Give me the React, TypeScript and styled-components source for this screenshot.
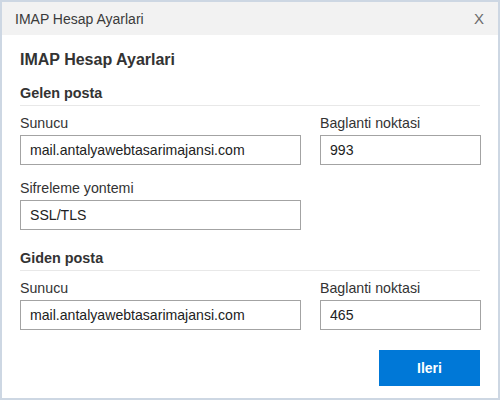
import styled, { createGlobalStyle } from "styled-components";

const GlobalStyle = createGlobalStyle`
  html, body {
    margin: 0;
    padding: 0;
    background: #ffffff;
  }
  body {
    font-family: "Liberation Sans", Arial, sans-serif;
    color: #333333;
  }
`;

const Dialog = styled.div`
  width: 500px;
  height: 400px;
  box-sizing: border-box;
  border: 2px solid #cdd7e3;
  background: #ffffff;
  display: flex;
  flex-direction: column;
`;

const TitleBar = styled.div`
  height: 33px;
  background: #f2f2f2;
  display: flex;
  align-items: center;
  justify-content: space-between;
  padding: 0 13px;
  font-size: 14px;
  color: #3a3a3a;
`;

const CloseButton = styled.span`
  font-size: 15px;
  color: #6b6b6b;
  cursor: pointer;
  padding-right: 1px;
`;

const Body = styled.div`
  padding: 15px 18px 0;
  display: flex;
  flex-direction: column;
`;

const Heading = styled.h1`
  margin: 0;
  font-size: 16px;
  line-height: 20px;
  font-weight: bold;
  color: #333333;
`;

const SectionTitle = styled.h2<{ $top: number }>`
  margin: ${({ $top }) => $top}px 0 0;
  padding-bottom: 4px;
  border-bottom: 1px solid #e8e8e8;
  font-size: 14.4px;
  line-height: 16px;
  font-weight: bold;
  color: #333333;
`;

const FieldRow = styled.div<{ $top: number }>`
  display: grid;
  grid-template-columns: 281px 161px;
  column-gap: 19px;
  margin-top: ${({ $top }) => $top}px;
`;

const Field = styled.div`
  display: flex;
  flex-direction: column;
`;

const Label = styled.label`
  font-size: 14.2px;
  line-height: 16px;
  margin-bottom: 4px;
  color: #333333;
`;

const Input = styled.input`
  height: 30px;
  box-sizing: border-box;
  border: 1px solid #a3a3a3;
  padding: 0 9px;
  font-family: "Liberation Sans", Arial, sans-serif;
  font-size: 14.1px;
  color: #222222;
  background: #ffffff;
  outline: none;
`;

const Footer = styled.div`
  display: flex;
  justify-content: flex-end;
  margin-top: 20px;
`;

const PrimaryButton = styled.button`
  width: 101px;
  height: 36px;
  border: none;
  background: #0078d7;
  color: #ffffff;
  font-family: "Liberation Sans", Arial, sans-serif;
  font-size: 14px;
  font-weight: bold;
  cursor: pointer;
`;

export default function App() {
  return (
    <>
      <GlobalStyle />
      <Dialog>
        <TitleBar>
          <span>IMAP Hesap Ayarlari</span>
          <CloseButton>X</CloseButton>
        </TitleBar>
        <Body>
          <Heading>IMAP Hesap Ayarlari</Heading>

          <SectionTitle $top={15}>Gelen posta</SectionTitle>
          <FieldRow $top={9}>
            <Field>
              <Label>Sunucu</Label>
              <Input defaultValue="mail.antalyawebtasarimajansi.com" />
            </Field>
            <Field>
              <Label>Baglanti noktasi</Label>
              <Input defaultValue="993" />
            </Field>
          </FieldRow>
          <FieldRow $top={15}>
            <Field>
              <Label>Sifreleme yontemi</Label>
              <Input defaultValue="SSL/TLS" />
            </Field>
          </FieldRow>

          <SectionTitle $top={20}>Giden posta</SectionTitle>
          <FieldRow $top={9}>
            <Field>
              <Label>Sunucu</Label>
              <Input defaultValue="mail.antalyawebtasarimajansi.com" />
            </Field>
            <Field>
              <Label>Baglanti noktasi</Label>
              <Input defaultValue="465" />
            </Field>
          </FieldRow>

          <Footer>
            <PrimaryButton>Ileri</PrimaryButton>
          </Footer>
        </Body>
      </Dialog>
    </>
  );
}
